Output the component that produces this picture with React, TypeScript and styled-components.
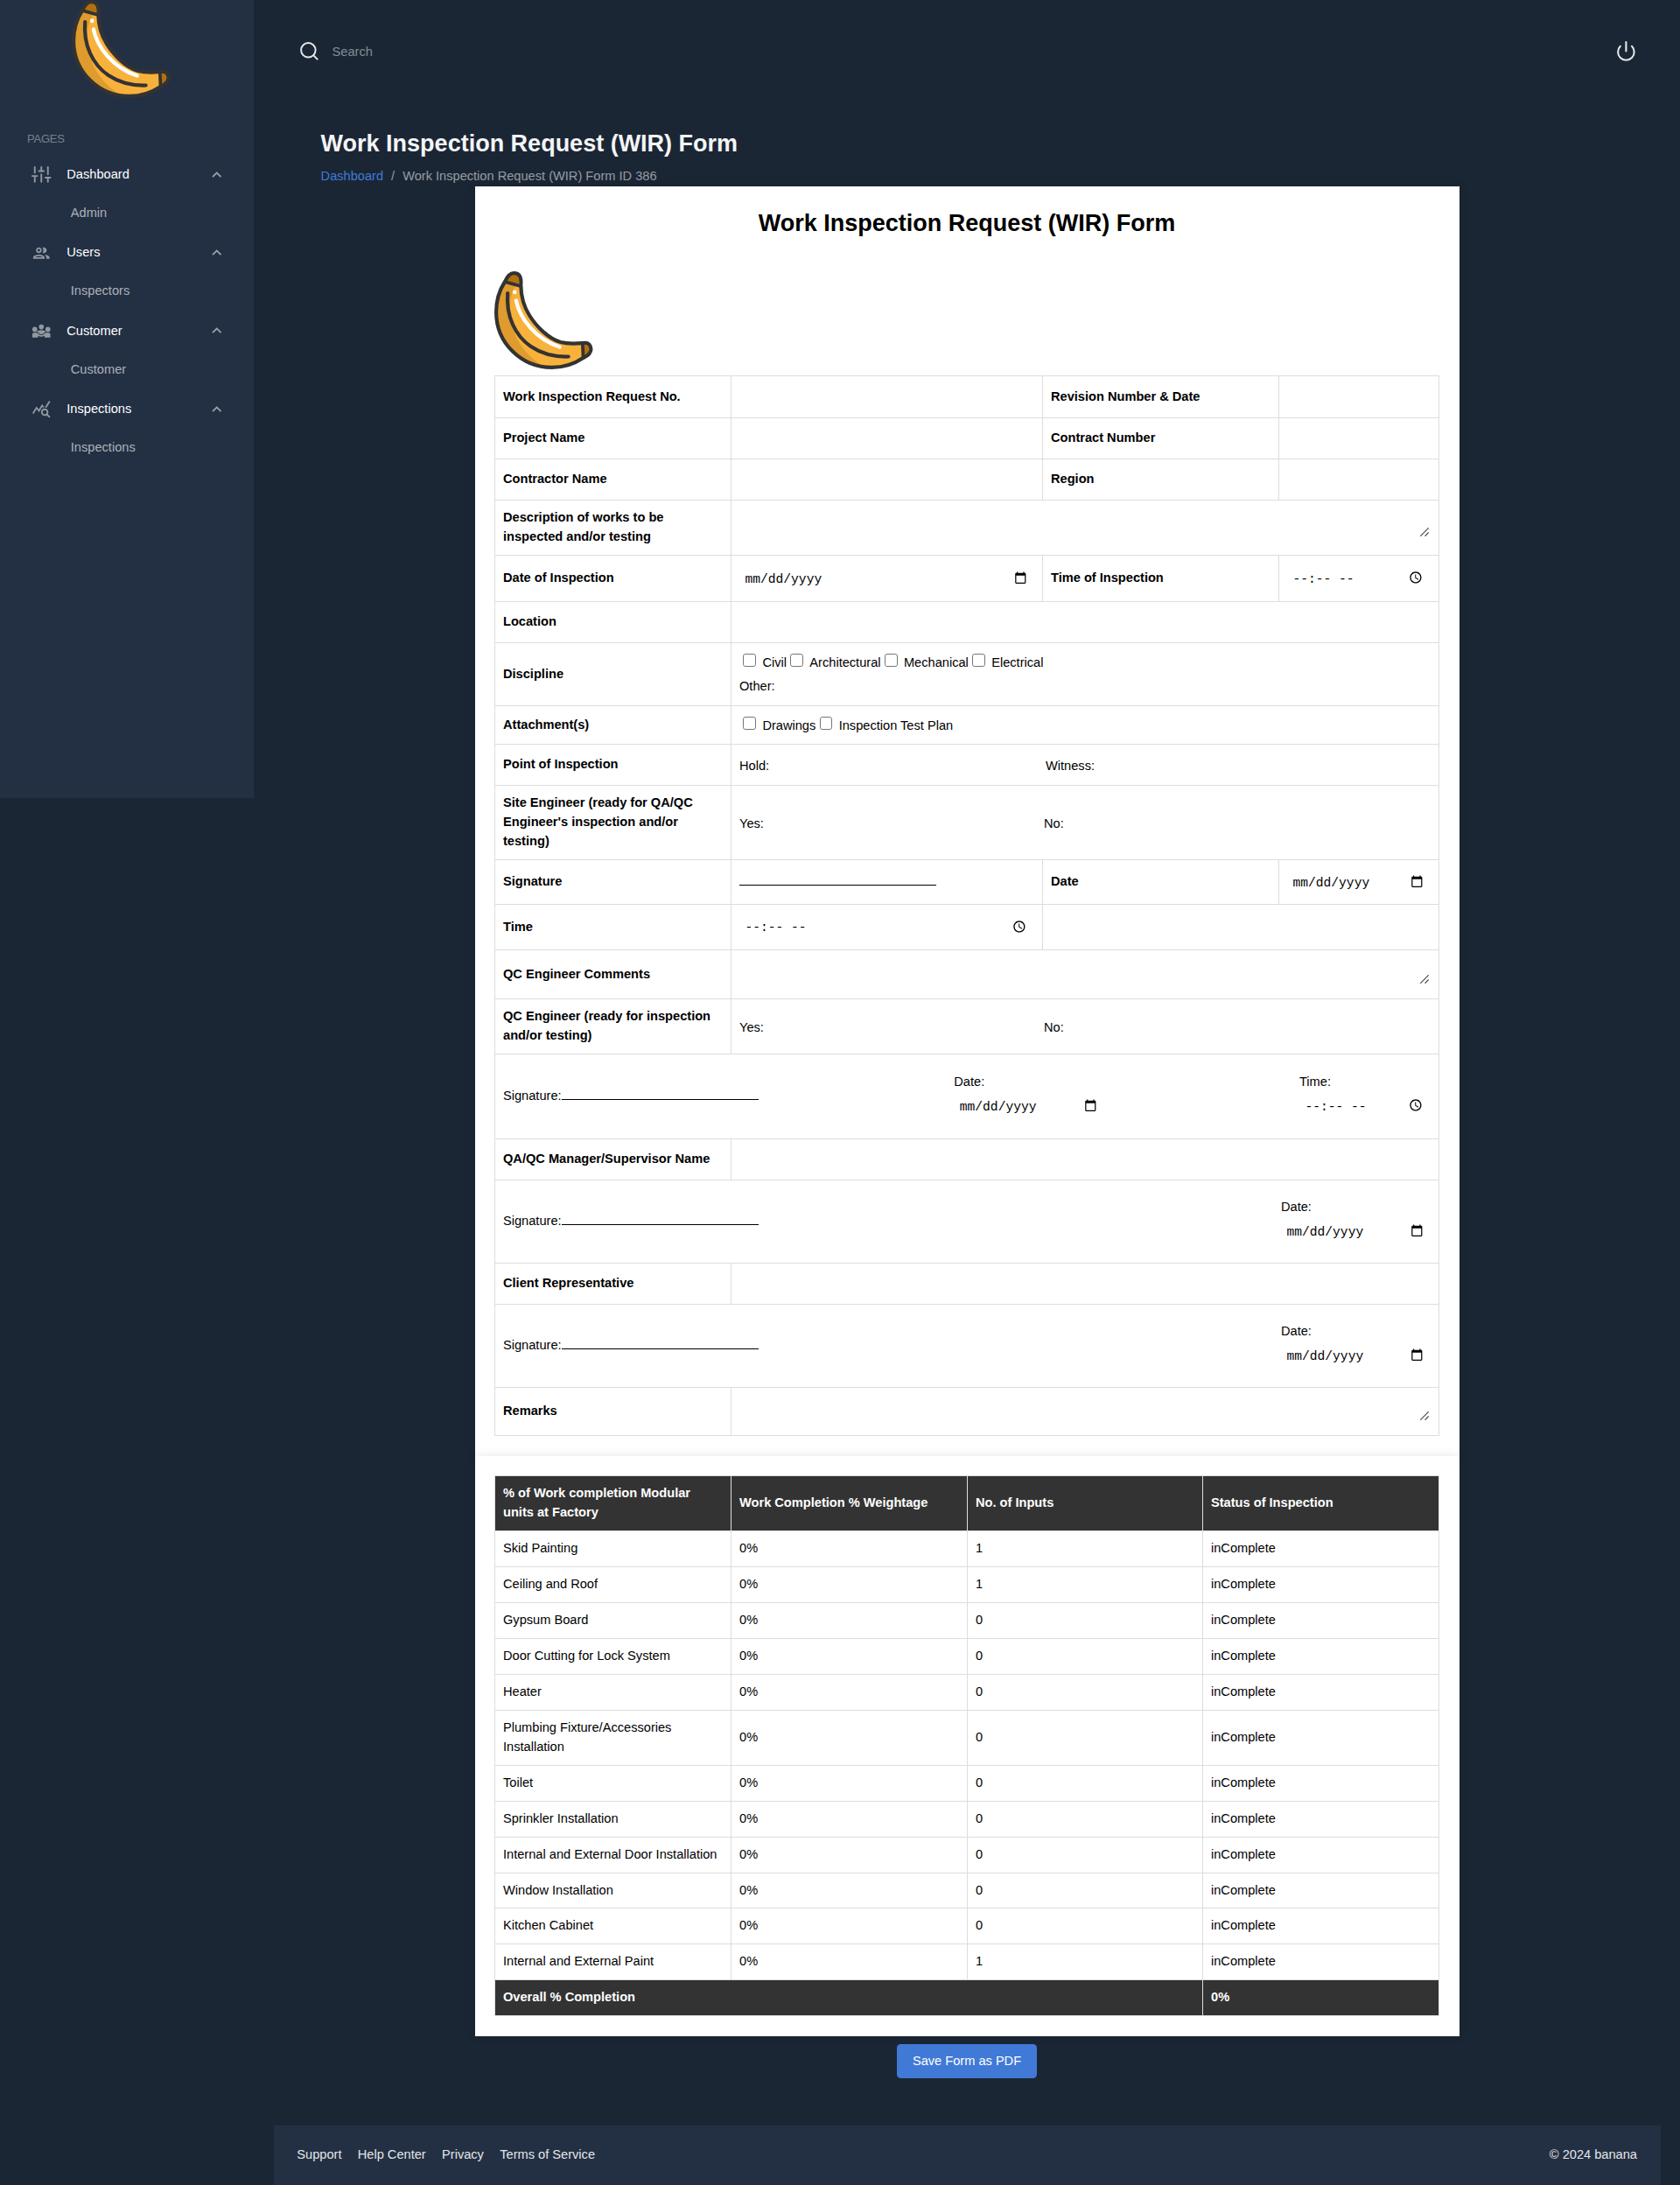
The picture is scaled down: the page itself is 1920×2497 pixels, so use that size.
import React from "react";
import styled, { createGlobalStyle } from "styled-components";
import { MdExpandLess, MdQueryStats } from "react-icons/md";

const Global = createGlobalStyle`
  *, *::before, *::after { box-sizing: border-box; }
  body {
    margin: 0;
    background: #1b2635;
    font-family: "Liberation Sans", Arial, sans-serif;
    font-size: 14.625px;
    line-height: 22px;
    color: #000;
  }
`;

const Shell = styled.div`
  display: flex;
  align-items: flex-start;
  min-height: 2497px;
`;

const Sidebar = styled.aside`
  width: 290px;
  height: 912px;
  flex: none;
  background: #233044;
`;

const SidebarLogo = styled.div`
  height: 112px;
  padding-left: 82px;
  svg { display: block; }
`;

const SectionTitle = styled.div`
  margin-top: 36px;
  padding-left: 31px;
  font-size: 13px;
  letter-spacing: -0.25px;
  color: rgba(255, 255, 255, 0.4);
`;

const NavList = styled.nav`
  padding-top: 7.5px;
`;

const NavGroup = styled.div`
  height: 89.3px;
`;

const NavItem = styled.a`
  display: flex;
  align-items: center;
  height: 44px;
  padding: 0 32px 0 36px;
  color: #fff;
`;

const NavIcon = styled.span`
  display: flex;
  width: 40.3px;
  color: rgba(255, 255, 255, 0.5);
`;

const NavText = styled.span`
  flex: 1;
  padding-bottom: 1px;
`;

const NavChevron = styled.span`
  display: flex;
  color: rgba(255, 255, 255, 0.55);
`;

const SubItem = styled.a`
  display: flex;
  align-items: center;
  height: 45px;
  padding: 0 0 2px 80.8px;
  color: rgba(255, 255, 255, 0.63);
`;

const Main = styled.main`
  flex: 1;
  min-height: 2497px;
  display: flex;
  flex-direction: column;
`;

const TopBar = styled.header`
  display: flex;
  justify-content: space-between;
  align-items: center;
  height: 117px;
  padding: 0 49.4px 0 51.4px;
  color: #e6e8ea;
`;

const SearchBox = styled.div`
  display: flex;
  align-items: center;
  gap: 13.4px;
  color: rgba(255, 255, 255, 0.47);
  svg { color: #e6e8ea; }
`;

const PageHead = styled.div`
  height: 96px;
  padding: 30px 76.6px 0;
`;

const PageTitle = styled.h1`
  margin: 0;
  font-size: 27px;
  line-height: 34px;
  font-weight: 700;
  color: #f4f5f6;
`;

const Crumbs = styled.nav`
  display: flex;
  gap: 9px;
  margin-top: 9px;
  color: rgba(255, 255, 255, 0.55);
  a { color: #407ad6; }
`;

const Paper = styled.section`
  width: 1125px;
  margin-left: 253px;
  padding: 22px 23px 23px 22px;
  background: #fff;
  box-shadow: 0 0 11px rgba(0, 0, 0, 0.1);
`;

const FormTitle = styled.h2`
  margin: 0;
  height: 75px;
  font-size: 27px;
  line-height: 40px;
  font-weight: 700;
  text-align: center;
`;

const PaperLogo = styled.div`
  height: 119px;
  svg { display: block; }
`;

const Sheet = styled.table`
  width: 1080px;
  table-layout: fixed;
  border-collapse: separate;
  border-spacing: 0;
  border-top: 1px solid #ddd;
  border-left: 1px solid #ddd;
`;

const Row = styled.tr<{ $h: number }>`
  height: ${(p) => p.$h}px;
`;

const Cell = styled.td`
  padding: 0 9px 2px;
  border-right: 1px solid #ddd;
  border-bottom: 1px solid #ddd;
  text-align: left;
  vertical-align: middle;
`;

const Label = styled(Cell).attrs({ as: "th" })`
  font-weight: 700;
`;

const DarkCell = styled(Cell)`
  background: #333;
  color: #fff;
  font-weight: 700;
`;

const Field = styled.div`
  display: flex;
  align-items: center;
  justify-content: space-between;
  height: 22px;
  padding: 0 8px 0 6.5px;
  font-family: "Liberation Mono", "Courier New", monospace;
  white-space: pre;
`;

const FieldText = styled.span`
  padding-top: 3px;
`;

const ClockBox = styled.span`
  display: flex;
  margin-right: 1.2px;
`;

const GripBox = styled.div`
  display: flex;
  justify-content: flex-end;
  padding: 12px 2px 0 0;
`;

const CheckLine = styled.div<{ $h: number }>`
  display: flex;
  align-items: flex-start;
  height: ${(p) => p.$h}px;
  padding-top: 2px;
`;

const CheckItem = styled.label`
  display: flex;
  align-items: flex-start;
`;

const Box = styled.input.attrs({ type: "checkbox" })`
  appearance: none;
  width: 14.6px;
  height: 14.6px;
  margin: 1px 7.4px 0 4.4px;
  border: 1px solid #767676;
  border-radius: 2.8px;
  background: #fff;
`;

const Pair = styled.div<{ $first: number }>`
  display: grid;
  grid-template-columns: ${(p) => p.$first}px 1fr;
  padding-top: 3px;
`;

const SignLine = styled.span`
  display: inline-block;
  width: 225px;
  border-bottom: 1px solid #000;
`;

const SignOnly = styled.div`
  height: 22px;
`;

const SignRow = styled.div`
  display: flex;
  justify-content: space-between;
  align-items: center;
`;

const Stamp = styled.div<{ $w: number }>`
  width: ${(p) => p.$w}px;
  display: flex;
  flex-direction: column;
  gap: 5px;
  padding-bottom: 5px;
`;

const Actions = styled.div`
  display: flex;
  padding: 9px 0 54px 735px;
`;

const SaveButton = styled.button`
  width: 160px;
  height: 39px;
  padding: 0 0 2px;
  border: 0;
  border-radius: 4.5px;
  background: #407ad6;
  color: #fff;
  font: inherit;
`;

const Footer = styled.footer`
  display: flex;
  justify-content: space-between;
  height: 68px;
  margin: 0 22px 0 23px;
  padding: 22px 27px 0 26.3px;
  background: #233044;
  color: #e3e6e9;
`;

const FooterLinks = styled.div`
  display: flex;
  gap: 18.3px;
`;

const BANANA_OUTLINE =
  "M22.3 2.1C16.5 2.1 13.8 8 12 12C5.5 22 2.1 34 2.1 46.7C2.1 82 31 109.9 66 109.9C81 109.9 93 105 102 99C107.5 96.5 110.9 93 110.9 89C110.9 84.5 108 81.6 103.5 81.9C94 82.6 86 83.6 76 81C62 77 48 63 40 50C33 39 30.6 26 30.4 16C31.4 6 28.5 2.1 22.3 2.1Z";

function Banana() {
  return (
    <svg width={112.5} height={112} viewBox="0 0 113 112" preserveAspectRatio="none" fill="none">
      <path d={BANANA_OUTLINE} fill="#f8b23b" />
      <path
        d="M12 13.5L24 17C18 28 16.5 42 19 56C23 78 36 97 58 109.5C26 106 3 79 3 46.7C3 34 6 23 12 13.5Z"
        fill="#df9b2d"
      />
      <path d="M13.5 11.5C15.5 7 18 4 22.3 4C26.5 4 28.8 7 28.4 12V16Z" fill="#b4700f" />
      <path d="M103 83.8C107 84 108.8 86 108.8 89C108.8 92.5 107 94.5 103.5 96.5Z" fill="#b4700f" />
      <path d={BANANA_OUTLINE} stroke="#333" strokeWidth="4.2" />
      <path d="M12.5 12.2L30 17M101.3 83L102 99" stroke="#333" strokeWidth="3.8" />
      <path
        d="M15.300 25C13 51 24 74 42 86C54 94 68 98 85 97.500"
        stroke="#333"
        strokeWidth="4.2"
        strokeLinecap="round"
      />
      <path d="M25 33.500C29 54 48 78 75 86.500" stroke="#fff" strokeWidth="4.2" strokeLinecap="round" />
      <circle cx="23.3" cy="23.8" r="2.4" fill="#fff" />
    </svg>
  );
}

const SlidersIcon = () => (
  <svg width="22.5" height="22.5" viewBox="0 0 24 24" fill="none" stroke="currentColor" strokeWidth="2" strokeLinecap="round">
    <path d="M4 21v-7M4 10V3M12 21v-9M12 8V3M20 21v-5M20 12V3M1 14h6M9 8h6M17 16h6" />
  </svg>
);

const UsersIcon = () => (
  <svg width="22.5" height="22.5" viewBox="0 0 24 24" fill="currentColor">
    <path d="M9 13.75c-2.34 0-7 1.17-7 3.5V19h14v-1.75c0-2.33-4.66-3.5-7-3.5zM4.34 17c.84-.58 2.87-1.25 4.66-1.25s3.82.67 4.66 1.25H4.34zM9 12c1.93 0 3.5-1.57 3.5-3.5S10.93 5 9 5 5.5 6.57 5.5 8.5 7.07 12 9 12zm0-5c.83 0 1.5.67 1.5 1.5S9.83 10 9 10s-1.5-.67-1.5-1.5S8.17 7 9 7zm7.04 6.81c1.16.84 1.96 1.96 1.96 3.44V19h4v-1.75c0-2.02-3.5-3.17-5.96-3.44zM15 12c1.93 0 3.5-1.57 3.5-3.5S16.93 5 15 5c-.54 0-1.04.13-1.5.35.63.89 1 1.98 1 3.15s-.37 2.26-1 3.15c.46.22.96.35 1.5.35z" />
  </svg>
);

const CustomersIcon = () => (
  <svg width="22.5" height="22.5" viewBox="0 0 24 24" fill="currentColor">
    <path d="M6.32 13.01c.96.02 1.85.5 2.45 1.34A3.961 3.961 0 0 0 12 16c1.29 0 2.5-.62 3.23-1.66.6-.84 1.49-1.32 2.45-1.34-.72-1.22-3.6-2-5.68-2-2.07 0-4.96.78-5.68 2.01z" />
    <circle cx="4" cy="10" r="3" />
    <circle cx="20" cy="10" r="3" />
    <circle cx="12" cy="7" r="3" />
    <path d="M21 14h-3.27c-.77 0-1.35.45-1.68.92-.04.06-1.36 2.08-4.05 2.08-1.43 0-3.03-.64-4.05-2.08-.39-.55-1-.92-1.68-.92H3c-1.1 0-2 .9-2 2v4h7v-2.26c1.15.8 2.54 1.26 4 1.26s2.85-.46 4-1.26V20h7v-4c0-1.1-.9-2-2-2z" />
  </svg>
);

const SearchIcon = () => (
  <svg width="24.75" height="24.75" viewBox="0 0 24 24" fill="none" stroke="currentColor" strokeWidth="1.9" strokeLinecap="round">
    <circle cx="11" cy="11" r="8" />
    <path d="M21 21L16.65 16.65" />
  </svg>
);

const PowerIcon = () => (
  <svg width="24.75" height="24.75" viewBox="0 0 24 24" fill="none" stroke="currentColor" strokeWidth="2" strokeLinecap="round">
    <path d="M18.36 6.64a9 9 0 1 1-12.73 0M12 2v10" />
  </svg>
);

const CalendarIcon = () => (
  <svg width="14.6" height="14.6" viewBox="0 0 24 24" fill="currentColor">
    <path d="M20 3h-1V1h-2v2H7V1H5v2H4c-1.1 0-2 .9-2 2v16c0 1.1.9 2 2 2h16c1.1 0 2-.9 2-2V5c0-1.1-.9-2-2-2zm0 18H4V8h16v13z" />
  </svg>
);

const ClockIcon = () => (
  <svg width="15.8" height="15.8" viewBox="0 0 24 24" fill="currentColor">
    <path d="M11.99 2C6.47 2 2 6.48 2 12s4.47 10 9.99 10C17.52 22 22 17.52 22 12S17.52 2 11.99 2zM12 20c-4.42 0-8-3.58-8-8s3.58-8 8-8 8 3.58 8 8-3.58 8-8 8zm.5-13H11v6l5.25 3.15.75-1.23-4.5-2.67z" />
  </svg>
);

const Grip = () => (
  <GripBox>
    <svg width="10" height="10" viewBox="0 0 10 10" stroke="#4a4a4a" strokeWidth="1.2">
      <path d="M0.3 9.7L9.7 0.3M5.5 9.7L9.7 5.5" />
    </svg>
  </GripBox>
);

const DateField = () => (
  <Field>
    <FieldText>mm/dd/yyyy</FieldText>
    <CalendarIcon />
  </Field>
);

const TimeField = () => (
  <Field>
    <FieldText>--:-- --</FieldText>
    <ClockBox>
      <ClockIcon />
    </ClockBox>
  </Field>
);

const nav = [
  { icon: <SlidersIcon />, title: "Dashboard", child: "Admin" },
  { icon: <UsersIcon />, title: "Users", child: "Inspectors" },
  { icon: <CustomersIcon />, title: "Customer", child: "Customer" },
  { icon: <MdQueryStats size={22.5} />, title: "Inspections", child: "Inspections" },
];

const works: [string, number, number][] = [
  ["Skid Painting", 1, 41],
  ["Ceiling and Roof", 1, 41],
  ["Gypsum Board", 0, 41],
  ["Door Cutting for Lock System", 0, 41],
  ["Heater", 0, 41],
  ["Plumbing Fixture/Accessories Installation", 0, 63],
  ["Toilet", 0, 41],
  ["Sprinkler Installation", 0, 41],
  ["Internal and External Door Installation", 0, 41],
  ["Window Installation", 0, 40],
  ["Kitchen Cabinet", 0, 41],
  ["Internal and External Paint", 1, 41],
];

const heads = [
  "% of Work completion Modular units at Factory",
  "Work Completion % Weightage",
  "No. of Inputs",
  "Status of Inspection",
];

function Cols({ widths }: { widths: number[] }) {
  return (
    <colgroup>
      {widths.map((w, i) => (
        <col key={i} width={w} />
      ))}
    </colgroup>
  );
}

function Checks({ items, h }: { items: string[]; h: number }) {
  return (
    <CheckLine $h={h}>
      {items.map((t) => (
        <CheckItem key={t}>
          <Box />
          {t}
        </CheckItem>
      ))}
    </CheckLine>
  );
}

function Signature({ withTime }: { withTime?: boolean }) {
  return (
    <SignRow>
      <div>
        Signature:
        <SignLine />
      </div>
      <Stamp $w={171}>
        <span>Date:</span>
        <DateField />
      </Stamp>
      {withTime && (
        <Stamp $w={150}>
          <span>Time:</span>
          <TimeField />
        </Stamp>
      )}
    </SignRow>
  );
}

function RequestTable() {
  return (
    <Sheet>
      <Cols widths={[270, 356, 270, 183]} />
      <tbody>
        <Row $h={48}>
          <Label>Work Inspection Request No.</Label>
          <Cell />
          <Label>Revision Number &amp; Date</Label>
          <Cell />
        </Row>
        <Row $h={47}>
          <Label>Project Name</Label>
          <Cell />
          <Label>Contract Number</Label>
          <Cell />
        </Row>
        <Row $h={47}>
          <Label>Contractor Name</Label>
          <Cell />
          <Label>Region</Label>
          <Cell />
        </Row>
        <Row $h={63}>
          <Label>Description of works to be inspected and/or testing</Label>
          <Cell colSpan={3}>
            <Grip />
          </Cell>
        </Row>
        <Row $h={53}>
          <Label>Date of Inspection</Label>
          <Cell>
            <DateField />
          </Cell>
          <Label>Time of Inspection</Label>
          <Cell>
            <TimeField />
          </Cell>
        </Row>
        <Row $h={47}>
          <Label>Location</Label>
          <Cell colSpan={3} />
        </Row>
        <Row $h={72}>
          <Label>Discipline</Label>
          <Cell colSpan={3}>
            <Checks h={29} items={["Civil", "Architectural", "Mechanical", "Electrical"]} />
            Other:
          </Cell>
        </Row>
        <Row $h={44}>
          <Label>Attachment(s)</Label>
          <Cell colSpan={3}>
            <Checks h={23} items={["Drawings", "Inspection Test Plan"]} />
          </Cell>
        </Row>
        <Row $h={47}>
          <Label>Point of Inspection</Label>
          <Cell colSpan={3}>
            <Pair $first={350}>
              <span>Hold:</span>
              <span>Witness:</span>
            </Pair>
          </Cell>
        </Row>
        <Row $h={85}>
          <Label>Site Engineer (ready for QA/QC Engineer's inspection and/or testing)</Label>
          <Cell colSpan={3}>
            <Pair $first={348}>
              <span>Yes:</span>
              <span>No:</span>
            </Pair>
          </Cell>
        </Row>
        <Row $h={51}>
          <Label>Signature</Label>
          <Cell>
            <SignOnly>
              <SignLine />
            </SignOnly>
          </Cell>
          <Label>Date</Label>
          <Cell>
            <DateField />
          </Cell>
        </Row>
        <Row $h={52}>
          <Label>Time</Label>
          <Cell>
            <TimeField />
          </Cell>
          <Cell colSpan={2} />
        </Row>
        <Row $h={56}>
          <Label>QC Engineer Comments</Label>
          <Cell colSpan={3}>
            <Grip />
          </Cell>
        </Row>
        <Row $h={63}>
          <Label>QC Engineer (ready for inspection and/or testing)</Label>
          <Cell colSpan={3}>
            <Pair $first={348}>
              <span>Yes:</span>
              <span>No:</span>
            </Pair>
          </Cell>
        </Row>
        <Row $h={97}>
          <Cell colSpan={4}>
            <Signature withTime />
          </Cell>
        </Row>
        <Row $h={47}>
          <Label>QA/QC Manager/Supervisor Name</Label>
          <Cell colSpan={3} />
        </Row>
        <Row $h={95}>
          <Cell colSpan={4}>
            <Signature />
          </Cell>
        </Row>
        <Row $h={47}>
          <Label>Client Representative</Label>
          <Cell colSpan={3} />
        </Row>
        <Row $h={95}>
          <Cell colSpan={4}>
            <Signature />
          </Cell>
        </Row>
        <Row $h={55}>
          <Label>Remarks</Label>
          <Cell colSpan={3}>
            <Grip />
          </Cell>
        </Row>
      </tbody>
    </Sheet>
  );
}

function CompletionTable() {
  return (
    <Sheet>
      <Cols widths={[270, 270, 269, 270]} />
      <tbody>
        <Row $h={63}>
          {heads.map((h) => (
            <DarkCell as="th" key={h}>
              {h}
            </DarkCell>
          ))}
        </Row>
        {works.map(([name, inputs, h]) => (
          <Row $h={h} key={name}>
            <Cell>{name}</Cell>
            <Cell>0%</Cell>
            <Cell>{inputs}</Cell>
            <Cell>inComplete</Cell>
          </Row>
        ))}
        <Row $h={41}>
          <DarkCell colSpan={3}>Overall % Completion</DarkCell>
          <DarkCell>0%</DarkCell>
        </Row>
      </tbody>
    </Sheet>
  );
}

export default function App() {
  return (
    <>
      <Global />
      <Shell>
        <Sidebar>
          <SidebarLogo>
            <Banana />
          </SidebarLogo>
          <SectionTitle>PAGES</SectionTitle>
          <NavList>
            {nav.map((n) => (
              <NavGroup key={n.title}>
                <NavItem>
                  <NavIcon>{n.icon}</NavIcon>
                  <NavText>{n.title}</NavText>
                  <NavChevron>
                    <MdExpandLess size={21.5} />
                  </NavChevron>
                </NavItem>
                <SubItem>{n.child}</SubItem>
              </NavGroup>
            ))}
          </NavList>
        </Sidebar>
        <Main>
          <TopBar>
            <SearchBox>
              <SearchIcon />
              <span>Search</span>
            </SearchBox>
            <PowerIcon />
          </TopBar>
          <PageHead>
            <PageTitle>Work Inspection Request (WIR) Form</PageTitle>
            <Crumbs>
              <a>Dashboard</a>
              <span>/</span>
              <span>Work Inspection Request (WIR) Form ID 386</span>
            </Crumbs>
          </PageHead>
          <Paper>
            <FormTitle>Work Inspection Request (WIR) Form</FormTitle>
            <PaperLogo>
              <Banana />
            </PaperLogo>
            <RequestTable />
          </Paper>
          <Paper>
            <CompletionTable />
          </Paper>
          <Actions>
            <SaveButton>Save Form as PDF</SaveButton>
          </Actions>
          <Footer>
            <FooterLinks>
              <span>Support</span>
              <span>Help Center</span>
              <span>Privacy</span>
              <span>Terms of Service</span>
            </FooterLinks>
            <span>© 2024 banana</span>
          </Footer>
        </Main>
      </Shell>
    </>
  );
}
